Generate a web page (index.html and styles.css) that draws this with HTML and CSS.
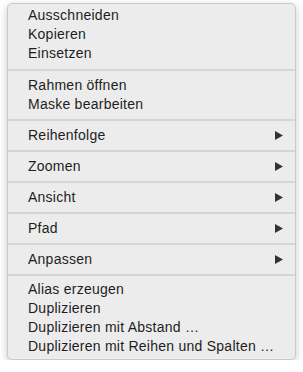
FILE: index.html
```html
<!DOCTYPE html>
<html lang="de">

<head>
    <meta charset="UTF-8">
    <meta name="viewport" content="width=device-width, initial-scale=1.0">
    <title>Kontextmenü</title>

    <link rel="stylesheet" href="styles.css">
</head>

<body>
    <div class="menu">
        <!-- Bearbeiten -->
        <ul class="grupo primero">
            <li>Ausschneiden</li>
            <li>Kopieren</li>
            <li>Einsetzen</li>
        </ul>
        <hr class="sep">
        <ul class="grupo">
            <li>Rahmen öffnen</li>
            <li>Maske bearbeiten</li>
        </ul>
        <hr class="sep">

        <!-- Untermenüs -->
        <div class="sub">Reihenfolge <svg class="flecha" width="8" height="9" viewBox="0 0 8 9"><polygon points="0,0 8,4.5 0,9" /></svg></div>
        <hr class="sep">
        <div class="sub">Zoomen <svg class="flecha" width="8" height="9" viewBox="0 0 8 9"><polygon points="0,0 8,4.5 0,9" /></svg></div>
        <hr class="sep">
        <div class="sub">Ansicht <svg class="flecha" width="8" height="9" viewBox="0 0 8 9"><polygon points="0,0 8,4.5 0,9" /></svg></div>
        <hr class="sep">
        <div class="sub">Pfad <svg class="flecha" width="8" height="9" viewBox="0 0 8 9"><polygon points="0,0 8,4.5 0,9" /></svg></div>
        <hr class="sep">
        <div class="sub">Anpassen <svg class="flecha" width="8" height="9" viewBox="0 0 8 9"><polygon points="0,0 8,4.5 0,9" /></svg></div>
        <hr class="sep">

        <ul class="grupo ultimo">
            <li>Alias erzeugen</li>
            <li>Duplizieren</li>
            <li>Duplizieren mit Abstand …</li>
            <li>Duplizieren mit Reihen und Spalten …</li>
        </ul>
    </div>
</body>

</html>
```

FILE: styles.css
```css
:root {
    --fondo: #ececec;
    --texto: #1e1e1e;
    --linea: #d5d5d5;
}

body {
    margin: 0;
    background: #fff;
    font-family: "Liberation Sans", Arial, sans-serif;
    font-size: 14px;
    letter-spacing: 0.25px;
    color: var(--texto);
}

.menu {
    width: 289px;
    height: 357px;
    box-sizing: border-box;
    margin: 3px 0 0 7px;
    background: var(--fondo);
    border: 1px solid #c9c9c9;
    border-radius: 5px;
    box-shadow: 0 3px 9px rgba(0, 0, 0, 0.22);
}

.grupo {
    list-style: none;
    margin: 0;
    padding: 5px 0;
}

.grupo li {
    line-height: 19px;
    padding-left: 20px;
}

.primero {
    padding-top: 2px;
    padding-bottom: 6px;
}

.ultimo {
    padding-top: 4px;
    padding-bottom: 3px;
}

.sep {
    height: 2px;
    margin: 0;
    border: none;
    background: var(--linea);
}

.sub {
    height: 29px;
    display: flex;
    align-items: center;
    justify-content: space-between;
    padding: 0 12px 0 20px;
    line-height: 19px;
}

.flecha {
    fill: #333;
}
```
